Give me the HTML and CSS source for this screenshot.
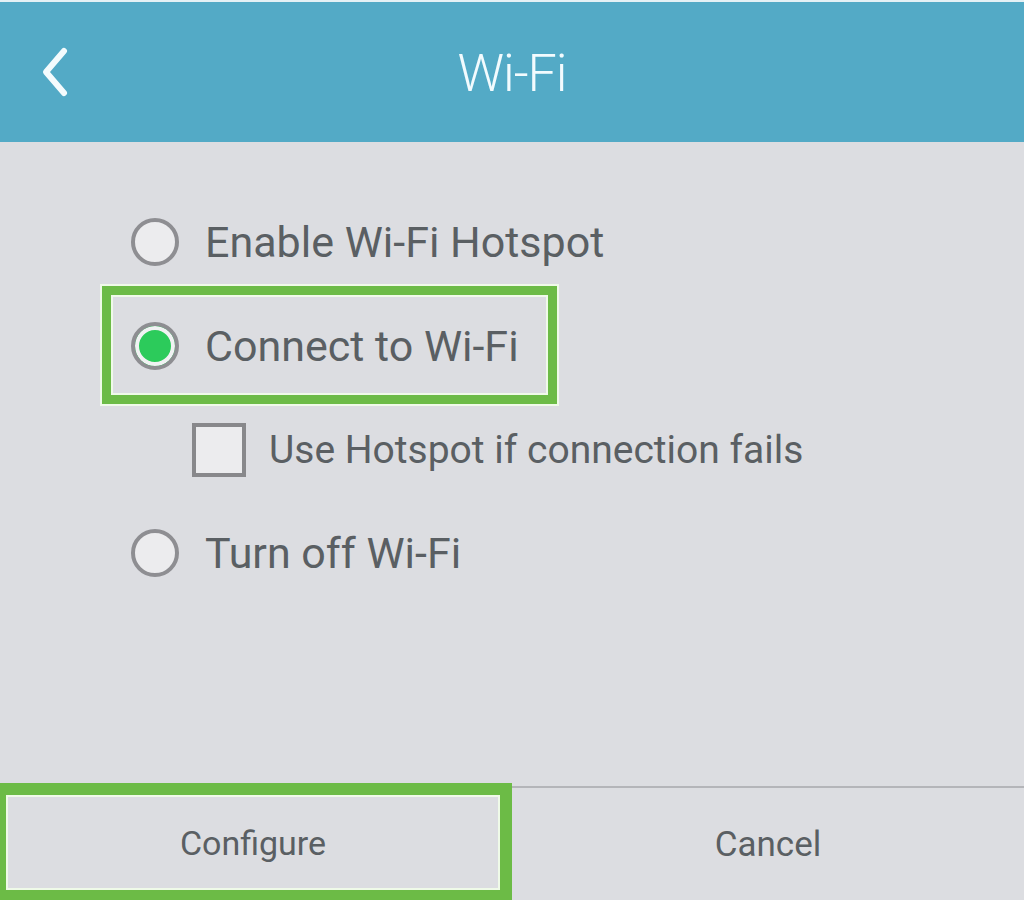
FILE: index.html
```html
<!DOCTYPE html>
<html lang="en">
<head>
    <meta charset="UTF-8">
    <meta name="viewport" content="width=device-width, initial-scale=1.0">
    <title>Wi-Fi</title>
    <link rel="stylesheet" href="styles.css">
</head>
<body>
    <div class="screen">
        <header class="topbar">
            <button class="back" aria-label="Back">
                <svg width="34" height="54" viewBox="0 0 34 54">
                    <path d="M26 6 L8 27 L26 48" fill="none" stroke="#f4fbfd" stroke-width="6" stroke-linecap="round" stroke-linejoin="round"/>
                </svg>
            </button>
            <h1>Wi-Fi</h1>
        </header>

        <main class="options">
            <label class="option">
                <span class="radio"></span>
                <span>Enable Wi-Fi Hotspot</span>
            </label>
            <label class="option highlight">
                <span class="radio checked"></span>
                <span>Connect to Wi-Fi</span>
            </label>
            <label class="option sub">
                <span class="checkbox"></span>
                <span>Use Hotspot if connection fails</span>
            </label>
            <label class="option">
                <span class="radio"></span>
                <span>Turn off Wi-Fi</span>
            </label>
        </main>

        <footer class="actions">
            <button class="action configure">Configure</button>
            <button class="action cancel">Cancel</button>
        </footer>
    </div>
</body>
</html>
```

FILE: styles.css
```css
body {
    margin: 0;
    font-family: 'Roboto', 'Liberation Sans', sans-serif;
    background: #dcdde1;
}

.screen {
    width: 1024px;
    height: 900px;
    display: flex;
    flex-direction: column;
    background: #dcdde1;
    overflow: hidden;
}

/* Header */
.topbar {
    height: 140px;
    border-top: 2px solid #e4f1f5;
    background: #53aac6;
    display: flex;
    align-items: center;
    justify-content: center;
    position: relative;
    flex-shrink: 0;
}

.topbar h1 {
    margin: 0 0 -3px;
    font-size: 52px;
    font-weight: 300;
    color: #f2fbfe;
    letter-spacing: -1px;
}

.back {
    position: absolute;
    left: 38px;
    top: 43px;
    padding: 0;
    border: none;
    background: none;
    display: flex;
}

/* Options */
.options {
    flex: 1;
    display: flex;
    flex-direction: column;
    padding: 48px 0 0 131px;
}

.option {
    display: flex;
    align-items: center;
    gap: 26px;
    width: fit-content;
    height: 104px;
    font-size: 43px;
    color: #5a5f63;
    position: relative;
}

.option.sub {
    margin-left: 61px;
    gap: 23px;
    height: 103px;
    font-size: 39px;
}

.highlight::after {
    content: "";
    position: absolute;
    top: -8px;
    bottom: -6px;
    left: -29px;
    right: -38px;
    border: 9px solid #6cbb46;
    box-shadow: 0 0 0 2px #effae8, inset 0 0 0 2px #effae8;
}

.radio {
    width: 40px;
    height: 40px;
    border: 4px solid #8e8e92;
    border-radius: 50%;
    background: #ececee;
    box-sizing: content-box;
    flex-shrink: 0;
}

.radio.checked {
    background: #2ccb5b;
    box-shadow: inset 0 0 0 4px #f1f2f3;
}

.checkbox {
    width: 46px;
    height: 46px;
    border: 4px solid #88888b;
    background: #ececee;
    flex-shrink: 0;
}

/* Footer buttons */
.actions {
    display: grid;
    grid-template-columns: 512px 512px;
    height: 117px;
    flex-shrink: 0;
}

.action {
    border: none;
    background: #dcdde1;
    font-family: 'Roboto', 'Liberation Sans', sans-serif;
    font-size: 34px;
    color: #5a5f63;
    padding: 0;
}

.configure {
    border: 12px solid #6cbb46;
    border-left-width: 6px;
    border-bottom-width: 10px;
    box-shadow: inset 0 0 0 2px #effae8;
}

.cancel {
    border-top: 2px solid #b4b5b9;
    margin-top: 3px;
    padding-top: 0;
    font-size: 35px;
}
```
